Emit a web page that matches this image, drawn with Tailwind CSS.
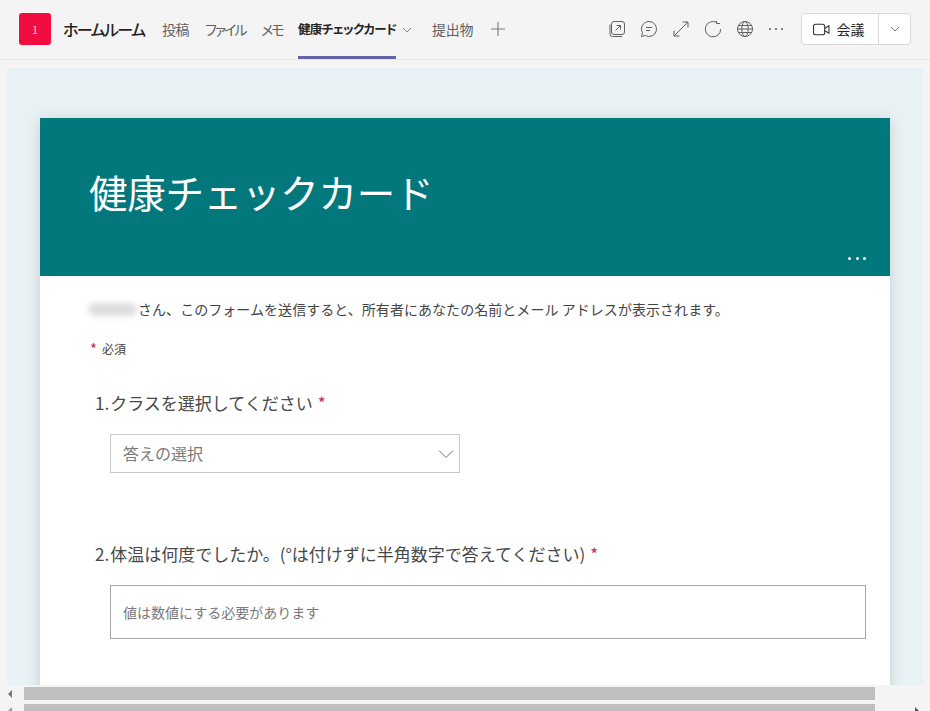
<!DOCTYPE html>
<html lang="ja">
  <head>
    <meta charset="UTF-8" />
    <title>健康チェックカード</title>
    <script src="https://cdn.jsdelivr.net/npm/@tailwindcss/browser@4"></script>
  </head>
  <body class="h-[711px] w-[930px] overflow-hidden bg-[#f4f4f4] font-['Noto_Sans_CJK_JP','Liberation_Sans',sans-serif] text-[#333]">
    <!-- Teams tab bar -->
    <header class="flex h-[60px] items-start border-b border-[#e6e6e6] pl-[19px]">
      <div class="mt-[13px] flex h-8 w-8 items-center justify-center rounded-[3px] bg-[#f20d41] text-[10px] text-white/80">1</div>
      <div class="ml-3 mt-[18px] w-[82px] whitespace-nowrap text-[16px] leading-[22px] font-medium tracking-[-1.6px] text-[#252423] [font-feature-settings:'palt']">ホームルーム</div>
      <nav class="ml-[17px] flex h-[59px] items-start text-[14px] leading-[22px] text-[#616161]">
        <span class="mt-[18px] w-[27px] whitespace-nowrap tracking-[-0.4px]">投稿</span>
        <span class="ml-4 mt-[18px] w-10 whitespace-nowrap tracking-[-2px] [font-feature-settings:'palt']">ファイル</span>
        <span class="ml-4 mt-[18px] w-[21px] whitespace-nowrap tracking-[-2px] [font-feature-settings:'palt']">メモ</span>
        <div class="ml-4 flex h-[59px] w-[98px] items-start border-b-[3px] border-[#6264a7]">
          <span class="mt-[18px] whitespace-nowrap text-[12.5px] font-bold tracking-[-0.65px] text-[#252423] [font-feature-settings:'palt']">健康チェックカード</span>
        </div>
        <svg class="ml-[6px] mt-[25px] h-[10px] w-[10px]" viewBox="0 0 10 10" fill="none" stroke="#777" stroke-width="0.9"><path d="M1 3l4 4 4-4" /></svg>
        <span class="ml-[20px] mt-[18px] tracking-[-0.3px]">提出物</span>
        <svg class="ml-[17px] mt-[21px] h-[16px] w-[16px]" viewBox="0 0 16 16" fill="none" stroke="#777" stroke-width="1.1"><path d="M8 1v14M1 8h14" /></svg>
      </nav>
      <div class="ml-auto mr-[19px] flex items-start">
        <div class="mt-[20px] flex items-center gap-[12px]">
          <svg class="h-[18px] w-[18px]" viewBox="0 0 18 18" fill="none" stroke="#616161" stroke-width="1"><rect x="3.5" y="1.5" width="13" height="13" rx="2.5" /><path d="M2 4.5v9.5a2.5 2.5 0 0 0 2.5 2.5h9.5M7.5 10.500l5-5M8.500 5.500h4v4" /></svg>
          <svg class="ml-[2px] h-[18px] w-[18px]" viewBox="0 0 18 18" fill="none" stroke="#616161" stroke-width="1"><path d="M9 1.500a7.500 7.500 0 1 1-3.700 14L1.500 16.500l1-3.800A7.500 7.500 0 0 1 9 1.500z" /><path d="M6 7.500h6M6 10.500h4" /></svg>
          <svg class="ml-[2px] h-[18px] w-[18px]" viewBox="0 0 18 18" fill="none" stroke="#616161" stroke-width="1"><path d="M2 16L16 2M10.500 2H16v5.500M2 10.500V16h5.500" /></svg>
          <svg class="ml-[2px] h-[18px] w-[18px]" viewBox="0 0 18 18" fill="none" stroke="#616161" stroke-width="1"><path d="M13 2.600A7.700 7.700 0 1 0 16.700 9M12.500 1v2.500H16" /></svg>
          <svg class="ml-[2px] h-[18px] w-[18px]" viewBox="0 0 18 18" fill="none" stroke="#616161" stroke-width="1"><circle cx="9" cy="9" r="7.500" /><ellipse cx="9" cy="9" rx="3.200" ry="7.500" /><path d="M1.500 9h15M2.500 5.500h13M2.500 12.500h13" /></svg>
          <div class="ml-[3px] flex h-[18px] w-[14px] items-center justify-between">
            <span class="h-[2px] w-[2px] rounded-full bg-[#555]"></span>
            <span class="h-[2px] w-[2px] rounded-full bg-[#555]"></span>
            <span class="h-[2px] w-[2px] rounded-full bg-[#555]"></span>
          </div>
        </div>
        <div class="ml-[18px] mt-[13px] flex h-8 w-[110px] items-center rounded-[4px] border border-[#d9d9d9] bg-white">
          <div class="flex h-full w-[77px] items-center justify-center gap-[7px] border-r border-[#d9d9d9] pr-[3px]">
            <svg class="h-[17px] w-[17px]" viewBox="0 0 16 16" fill="none" stroke="#333" stroke-width="1"><rect x="0.500" y="3" width="10.500" height="10" rx="2" /><path d="M11 7l4-2.500v7L11 9" /></svg>
            <span class="text-[14px] leading-none text-[#252423]">会議</span>
          </div>
          <svg class="mx-auto h-[10px] w-[10px]" viewBox="0 0 10 10" fill="none" stroke="#666" stroke-width="0.9"><path d="M1 3l4 4 4-4" /></svg>
        </div>
      </div>
    </header>

    <!-- Forms tab content -->
    <main class="mx-[7px] mt-2 h-[617px] overflow-hidden bg-[#e8f1f4] px-[33px] pt-[50px]">
      <section class="h-[600px] bg-white shadow-[0_2px_14px_rgba(0,0,0,0.14)]">
        <div class="relative h-[158px] bg-[#03787c] pl-[49px] pt-[45px]">
          <h1 class="text-[38.5px] leading-[56px] font-normal tracking-[-0.25px] text-white">健康チェックカード</h1>
          <div class="absolute bottom-[16px] right-[24px] flex w-[18px] justify-between">
            <span class="h-[3px] w-[3px] rounded-full bg-white"></span>
            <span class="h-[3px] w-[3px] rounded-full bg-white"></span>
            <span class="h-[3px] w-[3px] rounded-full bg-white"></span>
          </div>
        </div>
        <div class="pl-[50px] pr-6">
          <p class="mt-[22px] flex h-[22px] items-center text-[14px] tracking-[0.05px] text-[#444]">
            <span class="-ml-[2px] mr-[1px] h-[13px] w-[49px] rounded-full bg-[#dcdcdc] blur-[3px]"></span>
            <span class="whitespace-nowrap">さん、このフォームを送信すると、所有者にあなたの名前とメール アドレスが表示されます。</span>
          </p>
          <p class="mt-[19px] flex h-[20px] items-center text-[12px] text-[#444]">
            <span class="mr-[5px] text-[15px] text-[#c4314b]">*</span>必須
          </p>
          <h2 class="ml-[5px] mt-[32px] flex h-[24px] items-center text-[17px] leading-[24px] text-[#484848]">
            <span class="mr-[1px]">1.</span>クラスを選択してください<span class="ml-[5px] text-[#c4314b]">*</span>
          </h2>
          <div class="ml-[20px] mt-[19px] flex h-[39px] w-[350px] items-center justify-between border border-[#c8c8c8] pl-3 pr-[5px] text-[16px] text-[#7a7a7a]">
            <span class="pb-[2px]">答えの選択</span>
            <svg class="h-4 w-4" viewBox="0 0 16 16" fill="none" stroke="#777" stroke-width="1"><path d="M1 4.500l7 7 7-7" /></svg>
          </div>
          <h2 class="ml-[5px] mt-[69px] flex h-[24px] items-center whitespace-nowrap text-[17px] leading-[24px] text-[#484848]">
            <span class="mr-[1px]">2.</span>体温は何度でしたか。(°は付けずに半角数字で答えてください)<span class="ml-[5px] text-[#c4314b]">*</span>
          </h2>
          <div class="ml-[20px] mt-[19px] flex h-[54px] w-[756px] items-center border border-[#a6a6a6] pl-3 text-[14px] text-[#7a7a7a]">値は数値にする必要があります</div>
        </div>
      </section>
    </main>

    <!-- Browser scrollbars -->
    <div class="relative h-[26px] overflow-hidden pl-2">
      <div class="mt-[2px] flex h-[13px] items-center">
        <span class="h-0 w-0 border-y-[4px] border-r-[4px] border-y-transparent border-r-[#777]"></span>
        <span class="ml-3 h-[13px] w-[851px] bg-[#bfbfbf]"></span>
      </div>
      <div class="mt-1 flex h-[13px] items-center">
        <span class="h-0 w-0 border-y-[4px] border-r-[4px] border-y-transparent border-r-[#999]"></span>
        <span class="ml-3 h-[13px] w-[851px] bg-[#bfbfbf]"></span>
        <span class="ml-auto mr-[11px] h-0 w-0 border-y-[4px] border-l-[4px] border-y-transparent border-l-[#555]"></span>
      </div>
    </div>
  </body>
</html>
